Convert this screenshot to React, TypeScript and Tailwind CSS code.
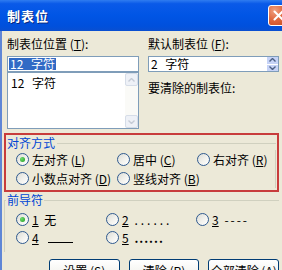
import React from "react";

function Radio({ checked = false }: { checked?: boolean }) {
  return (
    <span className="relative inline-flex w-[13px] h-[13px] shrink-0 rounded-full border border-[#2f5a8f] bg-[linear-gradient(135deg,#dcdcd5_0%,#f2f2ee_55%,#ffffff_100%)] items-center justify-center">
      {checked && (
        <span className="w-[5px] h-[5px] rounded-full bg-[radial-gradient(circle_at_35%_35%,#6fdc6f,#1e9a1e)]" />
      )}
    </span>
  );
}

function U({ children }: { children: React.ReactNode }) {
  return <span className="underline underline-offset-[1px]">{children}</span>;
}

function ArrowBtn({ up }: { up?: boolean }) {
  return (
    <div className="w-[13px] h-[13px] rounded-[2px] border border-[#d6dde8] bg-[#eef1f7] flex items-center justify-center">
      <svg width="7" height="4" viewBox="0 0 7 4">
        {up ? (
          <path d="M0.5 3.5 L3.5 0.5 L6.5 3.5" stroke="#c5cbd6" strokeWidth="1.4" fill="none" />
        ) : (
          <path d="M0.5 0.5 L3.5 3.5 L6.5 0.5" stroke="#c5cbd6" strokeWidth="1.4" fill="none" />
        )}
      </svg>
    </div>
  );
}

function XPButton({ children }: { children: React.ReactNode }) {
  return (
    <div className="w-[71px] h-[23px] rounded-[3px] border border-[#003c74] bg-[linear-gradient(180deg,#ffffff_0%,#f4f4f0_60%,#e3e2da_100%)] flex items-start justify-center pt-[4px] leading-[13px] whitespace-nowrap">
      {children}
    </div>
  );
}

export default function App() {
  return (
    <div className="w-[282px] h-[270px] overflow-hidden bg-[#ECE9D8] flex flex-col text-[12px] text-black font-['Noto_Sans_CJK_SC','Noto_Sans',sans-serif]">
      {/* Title bar */}
      <div className="h-[31px] shrink-0 flex items-center justify-between pl-[7px] bg-[linear-gradient(180deg,#2f7cf0_0%,#0a5ae8_12%,#0055e5_50%,#0050dc_85%,#0a4fd0_100%)]">
        <span className="text-white font-bold text-[13px] leading-[14px] tracking-[1px] [text-shadow:1px_1px_0_#0a2a80]">
          制表位
        </span>
        <div className="w-[21px] h-[21px] mr-[-7px] rounded-[3px] border border-white bg-[radial-gradient(circle_at_30%_25%,#f0a080,#e06a40_45%,#c4441c_100%)] flex items-center justify-center">
          <svg width="11" height="11" viewBox="0 0 11 11">
            <path d="M1.5 1.5 L9.5 9.5 M9.5 1.5 L1.5 9.5" stroke="#ffffff" strokeWidth="2" strokeLinecap="round" />
          </svg>
        </div>
      </div>

      {/* Body */}
      <div className="flex-1 flex flex-col border-l-2 border-[#5f86d6] pl-[2px] pr-[3px] pt-[6px]">
        {/* Top section */}
        <div className="flex gap-[9px] pl-[3px]">
          <div className="w-[132px] flex flex-col">
            <div className="h-[13px] leading-[13px] mb-[6px] whitespace-nowrap">
              制表位位置 (<U>T</U>):
            </div>
            <div className="h-[16px] border border-[#7f9db9] bg-white flex items-center pl-[1px]">
              <span className="bg-[#316ac5] text-white leading-[12px] h-[12px] px-[1px] whitespace-nowrap [word-spacing:5px]">
                12 字符
              </span>
            </div>
            <div className="h-[57px] border border-[#7f9db9] bg-white flex">
              <div className="flex-1 pl-[3px] pt-[4px] leading-[12px] whitespace-nowrap [word-spacing:5px]">12 字符</div>
              <div className="w-[13px] bg-[#fafaf7] flex flex-col justify-between">
                <ArrowBtn up />
                <ArrowBtn />
              </div>
            </div>
          </div>
          <div className="flex-1 flex flex-col">
            <div className="h-[13px] leading-[13px] mb-[6px] whitespace-nowrap">
              默认制表位 (<U>F</U>):
            </div>
            <div className="h-[16px] border border-[#7f9db9] bg-white flex items-center">
              <span className="flex-1 pl-[2px] leading-[12px] whitespace-nowrap [word-spacing:5px]">2 字符</span>
              <div className="w-[11px] h-full flex flex-col bg-[#c6d3f7]">
                <div className="flex-1 flex items-center justify-center border-b border-white">
                  <svg width="7" height="4" viewBox="0 0 7 4">
                    <path d="M0.5 3.5 L3.5 0.5 L6.5 3.5" stroke="#4d6185" strokeWidth="1.4" fill="none" />
                  </svg>
                </div>
                <div className="flex-1 flex items-center justify-center">
                  <svg width="7" height="4" viewBox="0 0 7 4">
                    <path d="M0.5 0.5 L3.5 3.5 L6.5 0.5" stroke="#4d6185" strokeWidth="1.4" fill="none" />
                  </svg>
                </div>
              </div>
            </div>
            <div className="mt-[10px] h-[12px] leading-[12px] whitespace-nowrap">要清除的制表位:</div>
          </div>
        </div>

        {/* Alignment group, highlighted */}
        <div className="mt-[4px] h-[59px] border-2 border-[#c83c3c] flex flex-col">
          <div className="flex items-center h-[14px] mt-[1px]">
            <span className="pl-[1px] text-[#0046d5] leading-[12px] whitespace-nowrap pr-[2px]">对齐方式</span>
            <div className="flex-1 h-px bg-[#d0d0bf] mr-[1px]" />
          </div>
          <div className="flex-1 flex flex-col gap-[6px] pt-[3px] pl-[10px] border-r border-[#d0d0bf] mr-[1px] mb-[2px]">
            <div className="flex items-center h-[13px]">
              <div className="w-[101px] shrink-0 flex items-center gap-[3px] whitespace-nowrap">
                <Radio checked />
                <span className="leading-[12px]">左对齐 (<U>L</U>)</span>
              </div>
              <div className="w-[80px] shrink-0 flex items-center gap-[3px] whitespace-nowrap">
                <Radio />
                <span className="leading-[12px]">居中 (<U>C</U>)</span>
              </div>
              <div className="flex items-center gap-[3px] whitespace-nowrap">
                <Radio />
                <span className="leading-[12px]">右对齐 (<U>R</U>)</span>
              </div>
            </div>
            <div className="flex items-center h-[13px]">
              <div className="w-[101px] shrink-0 flex items-center gap-[3px] whitespace-nowrap">
                <Radio />
                <span className="leading-[12px]">小数点对齐 (<U>D</U>)</span>
              </div>
              <div className="flex items-center gap-[3px] whitespace-nowrap">
                <Radio />
                <span className="leading-[12px]">竖线对齐 (<U>B</U>)</span>
              </div>
            </div>
          </div>
        </div>

        {/* Leader group */}
        <div className="relative mt-[8px] h-[52px] border-l border-t border-[#d0d0bf] pl-[11px] pt-[12px] flex flex-col gap-[5px]">
          <span className="absolute -top-[7px] left-[1px] bg-[#ECE9D8] px-[1px] text-[#0046d5] leading-[12px]">前导符</span>
          <div className="flex items-center h-[13px]">
            <div className="w-[90px] shrink-0 flex items-center gap-[3px] whitespace-nowrap">
              <Radio checked />
              <span className="leading-[12px] [word-spacing:3px]"><U>1</U> 无</span>
            </div>
            <div className="w-[90px] shrink-0 flex items-center gap-[3px] whitespace-nowrap">
              <Radio />
              <span className="leading-[12px] [word-spacing:3px]"><U>2</U> <span className="tracking-[3px]">......</span></span>
            </div>
            <div className="flex items-center gap-[3px] whitespace-nowrap">
              <Radio />
              <span className="leading-[12px] [word-spacing:3px]"><U>3</U> <span className="tracking-[2px]">----</span></span>
            </div>
          </div>
          <div className="flex items-center h-[13px]">
            <div className="w-[90px] shrink-0 flex items-center gap-[3px] whitespace-nowrap">
              <Radio />
              <span className="leading-[12px] flex items-center"><U>4</U><span className="inline-block w-[25px] h-px bg-black ml-[9px] mt-[9px]" /></span>
            </div>
            <div className="flex items-center gap-[3px] whitespace-nowrap">
              <Radio />
              <span className="leading-[12px] [word-spacing:3px]"><U>5</U> <span className="font-bold tracking-[1px]">......</span></span>
            </div>
          </div>
        </div>

        {/* Buttons */}
        <div className="mt-[7px] flex gap-[9px] pl-[45px]">
          <XPButton>设置 (<U>S</U>)</XPButton>
          <XPButton>清除 (<U>R</U>)</XPButton>
          <XPButton>全部清除 (<U>A</U>)</XPButton>
        </div>
      </div>
    </div>
  );
}
